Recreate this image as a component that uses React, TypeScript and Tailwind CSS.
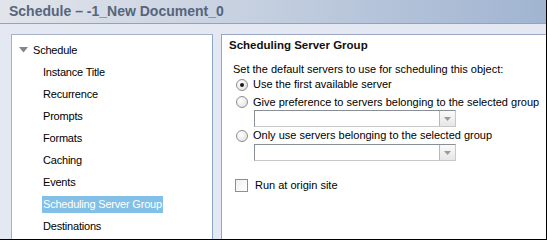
import React from "react";

const font = { fontFamily: '"Liberation Sans", Arial, sans-serif' };

function Radio({ checked }: { checked?: boolean }) {
  return (
    <span className="relative inline-flex w-[12px] h-[12px] rounded-full border border-[#8e8f8f] bg-[radial-gradient(circle_at_35%_35%,#ffffff,#dcdcdc)] items-center justify-center shrink-0">
      {checked && <span className="w-[4px] h-[4px] rounded-full bg-[#1a1a1a]" />}
    </span>
  );
}

function Dropdown() {
  return (
    <div className="w-[202px] h-[17px] border border-[#8a8f96] border-b-[#c8c8c8] border-r-[#c8c8c8] bg-white flex justify-end">
      <div className="w-[16px] h-full border-l border-[#b8b8b8] bg-[linear-gradient(#fafafa,#e6e6e6)] flex items-center justify-center">
        <svg width="7" height="4" viewBox="0 0 7 4">
          <path d="M0 0 L7 0 L3.5 4 Z" fill="#9a9a9a" />
        </svg>
      </div>
    </div>
  );
}

const items = [
  "Instance Title",
  "Recurrence",
  "Prompts",
  "Formats",
  "Caching",
  "Events",
  "Scheduling Server Group",
  "Destinations",
];

export default function App() {
  return (
    <div
      className="w-[547px] h-[240px] flex flex-col bg-[#e4e8f2] border-r border-b border-black overflow-hidden text-[11px] text-black"
      style={font}
    >
      <div className="h-[24px] shrink-0 border-b border-[#8fa3c2] bg-[linear-gradient(90deg,#e1e4ea_0%,#c6d0e0_45%,#a0b4d1_100%)] flex items-center pl-[9px]">
        <span className="text-[14px] font-bold text-[#56657c]">Schedule – -1_New Document_0</span>
      </div>
      <div className="flex-1 flex pt-[10px] pl-[11px] min-h-0">
        <div className="w-[202px] h-full bg-white border-l border-t border-r border-l-[#a5b2c8] border-t-[#a5b2c8] border-r-[#8ea6c8] pt-[4px] tracking-[-0.2px]">
          <div className="h-[22px] flex items-center pl-[7px] gap-[5px]">
            <svg width="9" height="6" viewBox="0 0 9 6">
              <path d="M0 0 L9 0 L4.5 5.5 Z" fill="#858585" />
            </svg>
            <span>Schedule</span>
          </div>
          {items.map((it) => (
            <div key={it} className="h-[22px] flex items-center pl-[30px]">
              {it === "Scheduling Server Group" ? (
                <span className="bg-[#82c0e8] text-white h-[17px] flex items-center px-[1px]">{it}</span>
              ) : (
                <span className="px-[1px]">{it}</span>
              )}
            </div>
          ))}
        </div>
        <div className="ml-[8px] flex-1 h-full bg-white border-l border-t border-l-[#a3a3b3] border-t-[#98a8c4] pl-[7px] pt-[3px]">
          <div className="h-[15px] flex items-center font-bold text-[11.5px] text-[#111]">Scheduling Server Group</div>
          <div className="pl-[4px] mt-[9px]">
            <div className="h-[14px] flex items-center">Set the default servers to use for scheduling this object:</div>
            <div className="h-[17px] flex items-center gap-[5px] pl-[3px]">
              <Radio checked />
              <span>Use the first available server</span>
            </div>
            <div className="h-[18px] flex items-center gap-[5px] pl-[3px]">
              <Radio />
              <span>Give preference to servers belonging to the selected group</span>
            </div>
            <div className="pl-[21px] mt-[-1px]">
              <Dropdown />
            </div>
            <div className="h-[17px] flex items-center gap-[5px] pl-[3px]">
              <Radio />
              <span>Only use servers belonging to the selected group</span>
            </div>
            <div className="pl-[21px]">
              <Dropdown />
            </div>
            <div className="h-[13px] flex items-center gap-[7px] pl-[2px] mt-[18px]">
              <span className="w-[13px] h-[13px] border border-[#8e8f8f] bg-[linear-gradient(135deg,#f0f0f0,#ffffff)] shrink-0" />
              <span>Run at origin site</span>
            </div>
          </div>
        </div>
      </div>
    </div>
  );
}
